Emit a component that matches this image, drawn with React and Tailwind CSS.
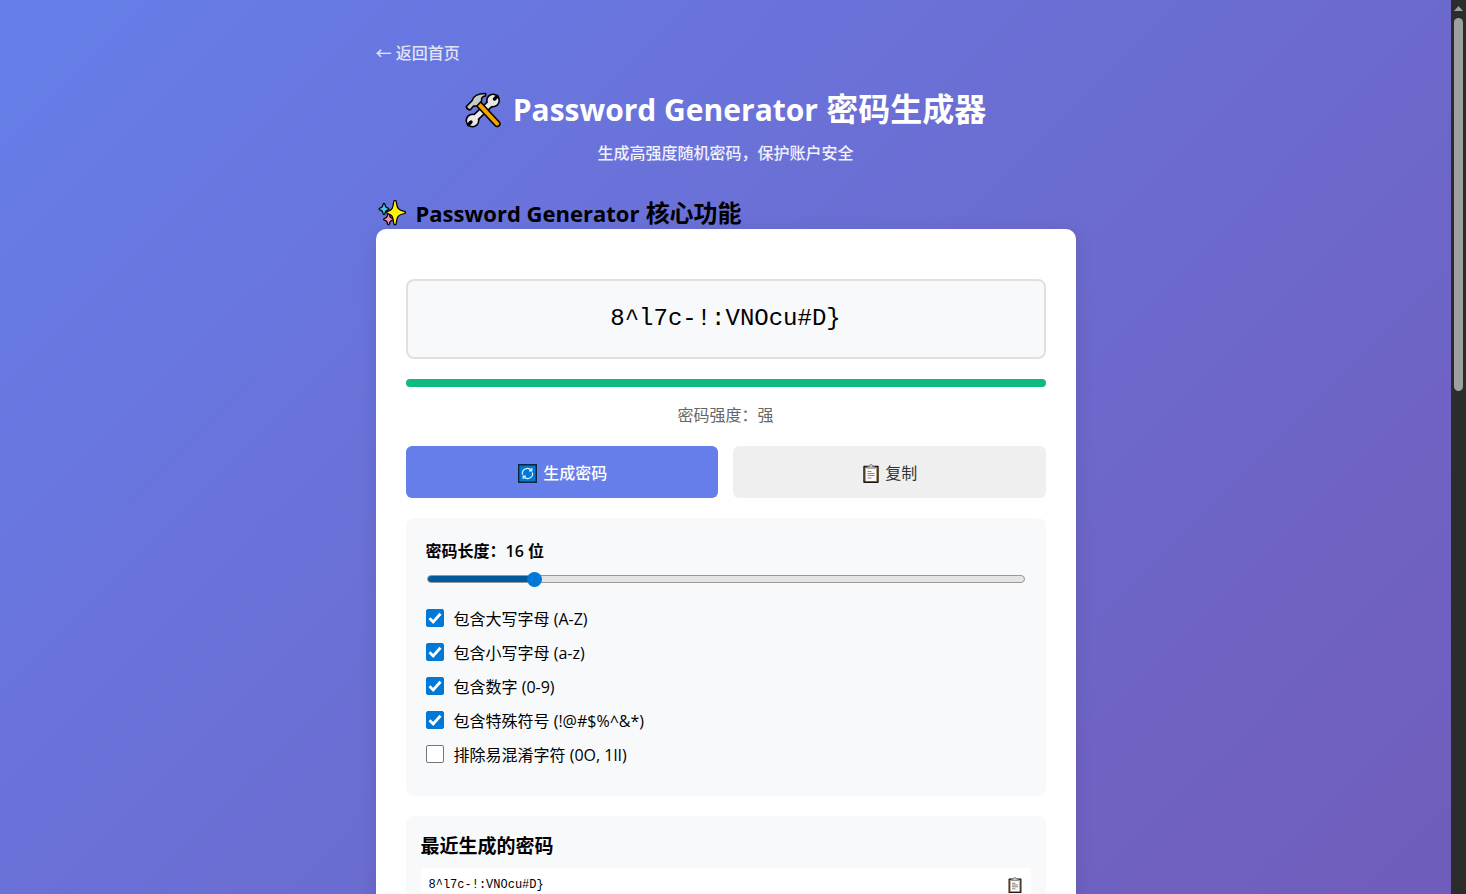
import { useState } from 'react';

const OPTIONS = [
  { id: 'uppercase', label: '包含大写字母 (A-Z)', checked: true },
  { id: 'lowercase', label: '包含小写字母 (a-z)', checked: true },
  { id: 'numbers', label: '包含数字 (0-9)', checked: true },
  { id: 'symbols', label: '包含特殊符号 (!@#$%^&*)', checked: true },
  { id: 'ambiguous', label: '排除易混淆字符 (0O, 1lI)', checked: false },
];

const CHARSETS = {
  uppercase: 'ABCDEFGHIJKLMNOPQRSTUVWXYZ',
  lowercase: 'abcdefghijklmnopqrstuvwxyz',
  numbers: '0123456789',
  symbols: '!@#$%^&*()_+-=[]{}|;:,.<>?',
};

const MIN_LENGTH = 6;
const MAX_LENGTH = 64;

function ToolsIcon() {
  return (
    <svg viewBox="0 0 36 36" className="size-9 shrink-0" aria-hidden="true">
      {/* wrench */}
      <path d="M28 9L7.500 28.500" stroke="#000" strokeWidth="8" />
      <circle cx="28" cy="8.500" r="7" />
      <circle cx="7.500" cy="28.500" r="7" />
      <path d="M28 9L7.500 28.500" stroke="#e8e8e8" strokeWidth="4.800" />
      <circle cx="28" cy="8.500" r="5.400" fill="#e8e8e8" />
      <circle cx="7.500" cy="28.500" r="5.400" fill="#e8e8e8" />
      <path d="M29.500 7l2.600-2.600M6 30l-2.600 2.600" stroke="#000" strokeWidth="3.400" strokeLinecap="round" />
      {/* hammer */}
      <g stroke="#000" strokeWidth="1.600" strokeLinejoin="round">
        <path d="M11.500 13.800l4-4 18.500 20c1.400 1.500 1.300 2.800.1 3.900s-2.700 1.200-4-.2z" fill="#f5a300" />
        <path
          d="M1.300 14.500L6.800 9C8 4.500 13 1.300 20.600 1.500v2.400c-3.300.4-4.500 2.300-4 5.100l-4.500 4.800-3.500.3-3.200 3.700c-2.300-.1-3.700-1.200-4.100-3.300z"
          fill="#c9c9c9"
        />
      </g>
    </svg>
  );
}

function SparklesIcon() {
  return (
    <svg viewBox="0 0 28 28" className="size-7 shrink-0" aria-hidden="true">
      <g stroke="#000" strokeWidth="1.200" strokeLinejoin="round">
        <path d="M6 4.300c.8 0 .9.6 1 1.300.3 2.500.9 3.100 3.200 3.500.9.2.9 1.500 0 1.700-2.300.4-2.900 1-3.200 3.500-.1.700-.2 1.300-1 1.300s-.9-.6-1-1.300C4.700 11.800 4.100 11.200 1.800 10.800c-.9-.2-.9-1.500 0-1.700C4.100 8.700 4.700 8.100 5 5.600c.1-.7.200-1.300 1-1.300z" fill="#45c9ef" />
        <path d="M10.500 14.700c.8 0 .9.6 1 1.300.3 2.500.9 3.100 3.200 3.500.9.2.9 1.500 0 1.700-2.300.4-2.900 1-3.200 3.500-.1.700-.2 1.300-1 1.300s-.9-.6-1-1.300c-.3-2.500-.9-3.100-3.200-3.500-.9-.2-.9-1.500 0-1.700 2.300-.4 2.900-1 3.200-3.500.1-.7.200-1.300 1-1.300z" fill="#ff91b0" />
        <path d="M17 1.300c.9 0 1.200.6 1.300 1.600.8 6.600 2 8.200 8 9.400 1.600.3 1.600 1.900 0 2.200-6 1.200-7.200 2.800-8 9.400-.1 1.300-.4 2-1.300 2s-1.200-.7-1.300-2c-.8-6.600-1.600-8.200-6-9.400-1.400-.3-1.400-1.900 0-2.200 4.400-1.200 5.200-2.800 6-9.400.1-1 .4-1.600 1.300-1.600z" fill="#fff100" />
      </g>
    </svg>
  );
}

function RefreshIcon() {
  return (
    <svg viewBox="0 0 19 19" className="size-[19px] shrink-0" aria-hidden="true">
      <path d="M.7.7h17.600v17.600H.7z" fill="#0078d7" stroke="#10233c" strokeWidth="1.400" />
      <g fill="none" stroke="#e8f5ff" strokeWidth="1.200">
        <path d="M4.600 10.500a4.900 4.900 0 0 1 8.600-4.200M14.400 8.500a4.900 4.900 0 0 1-8.600 4.200" />
        <path d="M13.800 4v2.800H11M5.200 15v-2.800H8" />
      </g>
    </svg>
  );
}

function ClipboardIcon({ className }) {
  return (
    <svg viewBox="0 0 16 19" className={className} aria-hidden="true">
      <path d="M1 2.500h14v15.800H1z" fill="#c49a72" stroke="#1c1613" strokeWidth="1.400" strokeLinejoin="round" />
      <path d="M3 4h10v13H3z" fill="#fafafa" />
      <path d="M4 4.200V2.500h2.300C6.500 1 7 .5 8 .5s1.500.5 1.700 2H12v1.700z" fill="#c6c6c6" stroke="#555" strokeWidth=".6" />
      <path d="M4.500 7.500h4M4.500 9.500h7M4.500 11.500h7M4.500 14h4" stroke="#8a8a8a" strokeWidth="1.200" />
    </svg>
  );
}

function Scrollbar() {
  return (
    <div className="flex w-[15px] shrink-0 flex-col items-center bg-[#2c2c2c]" aria-hidden="true">
      <svg viewBox="0 0 15 18" className="h-[18px] w-[15px]">
        <path d="M3 11L7.500 6 12 11z" fill="#9f9f9f" />
      </svg>
      <div className="h-[43%] max-h-[373px] w-[9px] rounded-full bg-[#9f9f9f]" />
    </div>
  );
}

export default function App() {
  const [password, setPassword] = useState('8^l7c-!:VNOcu#D}');
  const [history, setHistory] = useState(['8^l7c-!:VNOcu#D}']);
  const [length, setLength] = useState(16);
  const [options, setOptions] = useState(
    Object.fromEntries(OPTIONS.map((option) => [option.id, option.checked]))
  );

  const toggleOption = (id) => {
    setOptions((prev) => ({ ...prev, [id]: !prev[id] }));
  };

  const generatePassword = () => {
    let chars = Object.keys(CHARSETS)
      .filter((key) => options[key])
      .map((key) => CHARSETS[key])
      .join('');
    if (options.ambiguous) chars = chars.replace(/[0O1lI]/g, '');
    if (!chars) return;

    const values = crypto.getRandomValues(new Uint32Array(length));
    const next = Array.from(values, (value) => chars[value % chars.length]).join('');
    setPassword(next);
    setHistory((prev) => [next, ...prev].slice(0, 5));
  };

  const copyText = (text) => {
    navigator.clipboard?.writeText(text);
  };

  const filled = ((length - MIN_LENGTH) / (MAX_LENGTH - MIN_LENGTH)) * 100;

  return (
    <div className="flex h-screen font-['Open_Sans','Noto_Sans_CJK_SC',sans-serif] text-base text-black">
      <div className="min-w-0 flex-1 overflow-y-auto [scrollbar-width:none]">
        <div className="min-h-[2070px] bg-[linear-gradient(135deg,#667eea_0%,#764ba2_100%)] px-5 py-10">
          <div className="mx-auto max-w-[700px]">
            <a href="#" className="inline-block leading-[26px] font-medium text-white/80 hover:text-white">
              ← 返回首页
            </a>

            <header className="mt-[19px] text-center text-white">
              <h1 className="flex items-center justify-center gap-3 text-[32px] leading-[48px] font-bold">
                <ToolsIcon />
                <span>
                  <span className="text-[30px]">Password Generator</span> 密码生成器
                </span>
              </h1>
              <p className="mt-[7px] leading-6 font-medium text-white/90">生成高强度随机密码，保护账户安全</p>
            </header>

            <h2 className="mt-8 flex items-center gap-2.5 pl-0.5 text-2xl leading-8 font-bold">
              <SparklesIcon />
              <span>
                <span className="text-[22px]">Password Generator</span> 核心功能
              </span>
            </h2>

            <main className="rounded-[10px] bg-white px-[30px] pt-[50px] pb-[30px] shadow-[0_4px_20px_rgba(0,0,0,0.1)]">
              <output className="flex h-20 items-center justify-center rounded-lg border-2 border-[#e0e0e0] bg-[#f8f9fb] font-['Liberation_Mono',monospace] text-2xl">
                {password}
              </output>

              <div className="mt-5 h-2 rounded-full bg-[#10b981]" />
              <p className="mt-4 text-center leading-6 text-[#666]">密码强度：强</p>

              <div className="mt-[19px] grid grid-cols-2 gap-[15px]">
                <button
                  type="button"
                  onClick={generatePassword}
                  className="flex h-[52px] items-center justify-center gap-1.5 rounded-md bg-[#667eea] pt-0.5 pl-0.5 font-medium text-white"
                >
                  <RefreshIcon />
                  生成密码
                </button>
                <button
                  type="button"
                  onClick={() => copyText(password)}
                  className="flex h-[52px] items-center justify-center gap-1.5 rounded-md bg-[#efefef] pt-0.5 pl-0.5 text-[#333]"
                >
                  <ClipboardIcon className="h-[19px] w-4 shrink-0" />
                  复制
                </button>
              </div>

              <section className="mt-5 rounded-lg bg-[#f8f9fb] p-5 pb-[25px]">
                <label htmlFor="length" className="block leading-[26px] font-semibold">
                  密码长度：{length} 位
                </label>
                <div className="mt-[7px] grid h-4 items-center px-px">
                  <div className="col-start-1 row-start-1 h-2 overflow-hidden rounded-full border border-[#999] bg-[#e4e4e4]">
                    <div className="h-full bg-[#005a9e]" style={{ width: `${filled}%` }} />
                  </div>
                  <input
                    id="length"
                    type="range"
                    min={MIN_LENGTH}
                    max={MAX_LENGTH}
                    value={length}
                    onChange={(e) => setLength(Number(e.target.value))}
                    className="col-start-1 row-start-1 h-4 w-full appearance-none bg-transparent [&::-webkit-slider-thumb]:size-[15px] [&::-webkit-slider-thumb]:appearance-none [&::-webkit-slider-thumb]:rounded-full [&::-webkit-slider-thumb]:bg-[#0078d7]"
                  />
                </div>

                <div className="mt-3.5">
                  {OPTIONS.map((option) => (
                    <label key={option.id} className="flex h-[34px] items-center gap-2.5">
                      <span className="grid size-[18px] shrink-0">
                        <input
                          type="checkbox"
                          checked={options[option.id]}
                          onChange={() => toggleOption(option.id)}
                          className="peer col-start-1 row-start-1 size-[18px] appearance-none rounded-xs border border-[#767676] bg-white checked:border-[#0078d7] checked:bg-[#0078d7]"
                        />
                        <svg
                          viewBox="0 0 18 18"
                          className="pointer-events-none col-start-1 row-start-1 hidden size-[18px] peer-checked:block"
                        >
                          <path d="M3.500 9.300l3.700 3.600L14.500 4.700" fill="none" stroke="#fff" strokeWidth="2.800" />
                        </svg>
                      </span>
                      <span className="pt-0.5">{option.label}</span>
                    </label>
                  ))}
                </div>
              </section>

              <section className="mt-5 rounded-lg bg-[#f8f9fb] p-[15px]">
                <h3 className="text-[19px] leading-[30px] font-semibold">最近生成的密码</h3>
                <ul className="mt-[7px]">
                  {history.map((item, i) => (
                    <li key={i} className="mb-2 flex items-center justify-between rounded-sm bg-white px-2 py-[9px]">
                      <span className="font-['Liberation_Mono',monospace] text-xs">{item}</span>
                      <button type="button" aria-label="复制" onClick={() => copyText(item)}>
                        <ClipboardIcon className="mr-px h-4 w-3.5" />
                      </button>
                    </li>
                  ))}
                </ul>
              </section>
            </main>
          </div>
        </div>
      </div>
      <Scrollbar />
    </div>
  );
}
